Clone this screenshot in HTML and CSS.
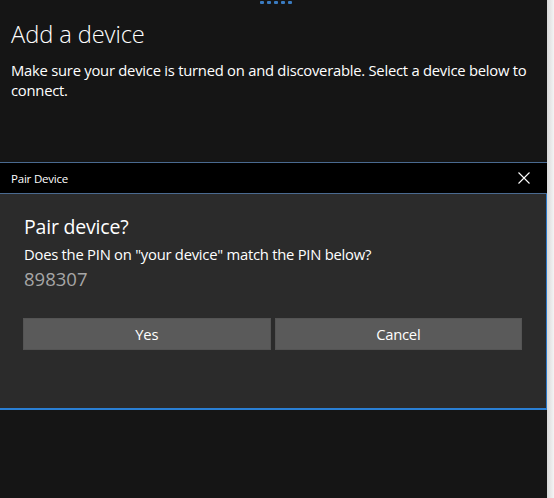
FILE: index.html
```html
<!DOCTYPE html>
<html>
<head>
<meta charset="utf-8">
<link rel="stylesheet" href="styles.css">
</head>
<body>
<div class="screen">
  <div class="main">
    <div class="dots"><span></span><span></span><span></span><span></span><span></span></div>
    <h1 class="title">Add a device</h1>
    <p class="desc">Make sure your device is turned on and discoverable. Select a device below to connect.</p>
    <div class="dialog">
      <div class="titlebar">
        <span class="tb-text">Pair Device</span>
        <svg class="close" width="12" height="12" viewBox="0 0 12 12"><path d="M0.5 0.5L11.5 11.5M11.5 0.5L0.5 11.5" stroke="#fff" stroke-width="1.1" fill="none"/></svg>
      </div>
      <div class="body">
        <div class="heading">Pair device?</div>
        <div class="question">Does the PIN on "your device" match the PIN below?</div>
        <div class="pin">898307</div>
        <div class="buttons">
          <button class="btn">Yes</button>
          <button class="btn">Cancel</button>
        </div>
      </div>
    </div>
  </div>
  <div class="edge"></div>
</div>
</body>
</html>
```

FILE: styles.css
```css
html, body {
  margin: 0;
  padding: 0;
  background: #151515;
  width: 554px;
  height: 498px;
  overflow: hidden;
}
.screen {
  display: flex;
  width: 554px;
  height: 498px;
  font-family: "Open Sans", "Noto Sans", sans-serif;
  color: #fff;
}
.main {
  width: 547px;
  background: #151515;
  display: flex;
  flex-direction: column;
}
.edge {
  flex: 1;
  background: linear-gradient(to right, #d9d9d9, #f4f4f4);
}
.dots {
  display: flex;
  gap: 3px;
  justify-content: center;
  padding-left: 5px;
  height: 5px;
  margin-top: 1px;
}
.dots span {
  width: 4px;
  height: 3px;
  border-radius: 1px;
  background: #3a7bc0;
}
.title {
  margin: 13px 0 0 11px;
  font-size: 23.7px;
  font-weight: 300;
  line-height: 30px;
  letter-spacing: -0.1px;
}
.desc {
  margin: 11px 0 0 11px;
  width: 530px;
  font-size: 14.8px;
  line-height: 20px;
  letter-spacing: -0.25px;
}
.dialog {
  margin-top: 62px;
}
.titlebar {
  height: 30px;
  background: #000;
  border-top: 1px solid #4a6a90;
  border-bottom: 1px solid #4a6a90;
  display: flex;
  align-items: center;
  justify-content: space-between;
  padding: 0 17px 0 11px;
}
.tb-text {
  font-size: 11.5px;
  letter-spacing: -0.2px;
}
.close {
  display: block;
}
.body {
  height: 216px;
  background: #2b2b2b;
  border-right: 1px solid #2a78c8;
  border-bottom: 2px solid #2a7fd4;
  padding: 0 0 0 24px;
  box-sizing: border-box;
}
.heading {
  padding-top: 20px;
  font-size: 19.5px;
  line-height: 26px;
  letter-spacing: -0.2px;
}
.question {
  margin-top: 4px;
  font-size: 14.8px;
  line-height: 20px;
  letter-spacing: -0.25px;
}
.pin {
  margin-top: 3px;
  font-size: 18.5px;
  line-height: 24px;
  color: #a6a6a6;
}
.buttons {
  display: flex;
  gap: 4px;
  margin-top: 27px;
  margin-left: -1px;
  width: 499px;
}
.btn {
  flex: 1;
  height: 32px;
  background: #5a5a5a;
  border: 1px solid #545454;
  color: #fff;
  font-family: "Open Sans", "Noto Sans", sans-serif;
  font-size: 14.8px;
  letter-spacing: -0.25px;
  padding: 0;
}
```
